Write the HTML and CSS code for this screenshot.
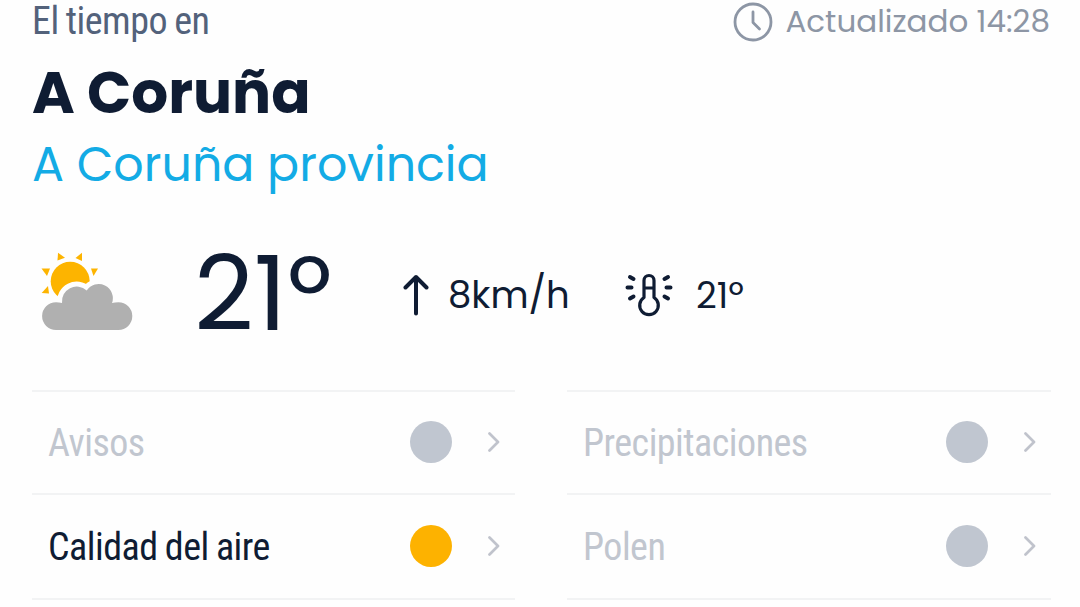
FILE: index.html
```
<!DOCTYPE html>
<html lang="es">
<head>
    <meta charset="UTF-8">
    <meta name="viewport" content="width=device-width, initial-scale=1.0">
    <title>El tiempo en A Coruña</title>
    <link rel="stylesheet" href="styles.css">
</head>
<body>
    <div class="weather">
        <div class="top">
            <span class="intro">El tiempo en</span>
            <div class="updated">
                <svg class="clock" viewBox="0 0 40 40">
                    <circle cx="20" cy="20" r="18"/>
                    <path d="M20 10v10.500l6.500 6.500"/>
                </svg>
                <span class="updated-text">Actualizado 14:28</span>
            </div>
        </div>
        <h1>A Coruña</h1>
        <h2>A Coruña provincia</h2>

        <div class="current">
            <svg class="sky" viewBox="0 0 92 80">
                <g fill="#fdb400">
                    <circle cx="29.200" cy="30.200" r="19.500"/>
                    <path d="M17 1.700l7 5-7.500 2.800z"/>
                    <path d="M41 1.700v8.300l-6.500-3z"/>
                    <path d="M0.500 17.500h8.500l-3 7.500z"/>
                    <path d="M50 17.500h7l-4.500 7.500z"/>
                    <path d="M7 35l1 7.500-7.300-.5z"/>
                </g>
                <path class="cloud-edge" d="M15 79a13.900 13.900 0 0 1 0-27.800q3 0 6 .8A14.800 14.800 0 0 1 45.700 39.500A14.200 14.200 0 0 1 71 52q3-.8 6.400-.8a13.900 13.900 0 0 1 0 27.800z"/>
                <path class="cloud" d="M15 79a13.900 13.900 0 0 1 0-27.800q3 0 6 .8A14.800 14.800 0 0 1 45.700 39.500A14.200 14.200 0 0 1 71 52q3-.8 6.400-.8a13.900 13.900 0 0 1 0 27.800z"/>
            </svg>
            <span class="temp">21º</span>
            <svg class="arrow" viewBox="0 0 26 42">
                <path d="M13 39.500v-36.500M2.500 13.500l10.500-10.500l10.500 10.500"/>
            </svg>
            <span class="wind">8km/h</span>
            <svg class="thermo" viewBox="0 0 48 44">
                <path d="M19 24.500v-17a5 5 0 0 1 10 0v17a9.300 9.300 0 1 1-10 0zM19 15h10"/>
                <path class="rays" d="M5 4l3.500 2M2.500 14.500h4M5 25.500l3.500-2M43 4l-3.500 2M45.500 14.500h-4M43 25.500l-3.500-2"/>
            </svg>
            <span class="feels">21º</span>
        </div>

        <div class="grid">
            <div class="item">
                <span class="label">Avisos</span>
                <span class="dot"></span>
                <svg class="chevron" viewBox="0 0 12 20"><path d="M1.500 1.500l8.500 8.500l-8.500 8.500"/></svg>
            </div>
            <div class="item">
                <span class="label">Precipitaciones</span>
                <span class="dot"></span>
                <svg class="chevron" viewBox="0 0 12 20"><path d="M1.500 1.500l8.500 8.500l-8.500 8.500"/></svg>
            </div>
            <div class="item active last">
                <span class="label">Calidad del aire</span>
                <span class="dot"></span>
                <svg class="chevron" viewBox="0 0 12 20"><path d="M1.500 1.500l8.500 8.500l-8.500 8.500"/></svg>
            </div>
            <div class="item last">
                <span class="label">Polen</span>
                <span class="dot"></span>
                <svg class="chevron" viewBox="0 0 12 20"><path d="M1.500 1.500l8.500 8.500l-8.500 8.500"/></svg>
            </div>
        </div>
    </div>
</body>
</html>
```
FILE: styles.css
```
body {
    margin: 0;
    background: #fefefe;
    color: #0f1c33;
    font-family: Poppins, Inter, sans-serif;
    overflow: hidden;
}
svg {
    flex: none;
    fill: none;
    stroke-linecap: round;
    stroke-linejoin: round;
}
.weather {
    padding: 0 29px 0 32px;
}
.top {
    display: flex;
    justify-content: space-between;
    height: 44px;
    line-height: 43px;
}
.intro,
.label {
    font-family: "Roboto Condensed", Roboto, sans-serif;
    font-stretch: 75%;
    font-size: 38px;
    letter-spacing: -0.5px;
    word-spacing: -1px;
}
.intro {
    color: #53627b;
}
.updated {
    display: flex;
    gap: 12px;
    margin-right: 1px;
    color: #8d96a5;
    font-size: 31px;
    line-height: 43px;
    white-space: nowrap;
}
.clock {
    width: 40px;
    height: 40px;
    margin-top: 2px;
    stroke: #8d96a5;
    stroke-width: 2.800;
}
h1 {
    margin: 0;
    height: 88px;
    line-height: 98px;
    font-size: 58px;
    font-weight: 700;
}
h2 {
    margin: 0;
    height: 68px;
    line-height: 66px;
    font-size: 47.500px;
    font-weight: 400;
    color: #13abe5;
}
.current {
    display: flex;
    height: 190px;
    align-items: center;
    white-space: nowrap;
}
.sky {
    width: 92px;
    height: 80px;
    margin: 0 0 8px 9px;
}
.cloud {
    fill: #b0b0b0;
}
.cloud-edge {
    stroke: #fefefe;
    stroke-width: 10;
}
.temp {
    width: 209px;
    margin: 0 0 2px 61px;
    font-size: 104px;
    line-height: 150px;
}
.arrow {
    width: 26px;
    height: 42px;
    stroke: #0f1c33;
    stroke-width: 4;
}
.wind {
    width: 177px;
    margin-left: 19px;
    font-size: 37px;
}
.thermo {
    width: 48px;
    height: 44px;
    stroke: #0f1c33;
    stroke-width: 3.200;
}
.rays {
    stroke-width: 4;
}
.feels {
    margin-left: 23px;
    font-size: 36px;
}
.grid {
    display: grid;
    grid-template-columns: 483px 484px;
    grid-template-rows: 103px 107px;
    column-gap: 52px;
}
.item {
    display: flex;
    align-items: center;
    box-sizing: border-box;
    padding: 0 15px 1px 16px;
    border-top: 2px solid #f2f3f4;
    color: #c1c6cf;
}
.last {
    border-bottom: 2px solid #f2f3f4;
}
.label {
    flex: 1;
    padding-top: 2px;
}
.dot {
    width: 42px;
    height: 42px;
    margin-right: 36px;
    border-radius: 50%;
    background: #c0c6d0;
}
.chevron {
    width: 12px;
    height: 20px;
    stroke: #c0c3cc;
    stroke-width: 2.700;
}
.active {
    color: #0f1c33;
}
.active .dot {
    background: #fdb200;
}
```
